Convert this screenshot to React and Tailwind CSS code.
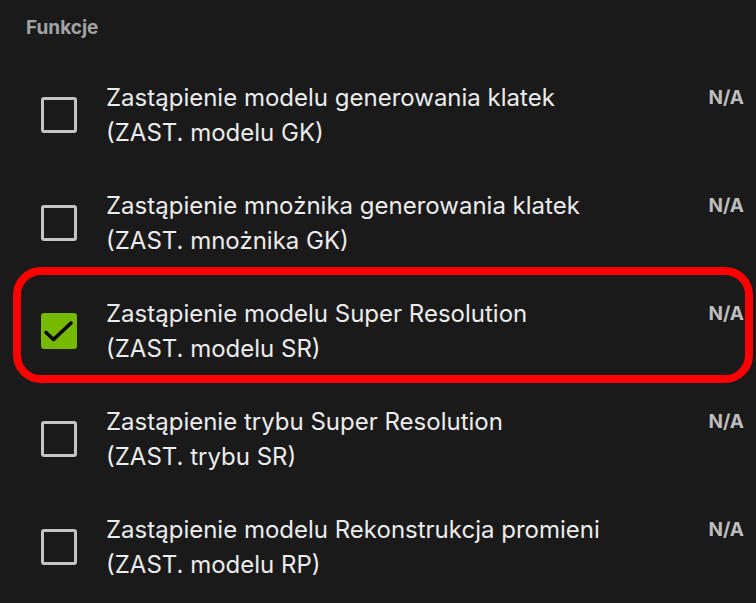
const rows = [
    { title: "Zastąpienie modelu generowania klatek", short: "(ZAST. modelu GK)", checked: false },
    { title: "Zastąpienie mnożnika generowania klatek", short: "(ZAST. mnożnika GK)", checked: false },
    { title: "Zastąpienie modelu Super Resolution", short: "(ZAST. modelu SR)", checked: true },
    { title: "Zastąpienie trybu Super Resolution", short: "(ZAST. trybu SR)", checked: false },
    { title: "Zastąpienie modelu Rekonstrukcja promieni", short: "(ZAST. modelu RP)", checked: false },
];

const Checkbox = ({ checked }) =>
    checked ? (
        <div className="w-[36px] h-[36px] rounded-[3px] bg-[#76b900] flex items-center justify-center shrink-0">
            <svg width="36" height="36" viewBox="0 0 36 36" fill="none">
                <path d="M5 19.5 L12.5 26.5 L30 10" stroke="#000" strokeWidth="3.6" strokeLinecap="round" strokeLinejoin="round" />
            </svg>
        </div>
    ) : (
        <div className="w-[36px] h-[36px] rounded-[3px] border-[3px] border-[#c4c4c4] shrink-0" />
    );

const App = () => {
    return (
        <div
            className="relative w-[756px] h-[603px] overflow-hidden bg-[#1a1a1a]"
            style={{ fontFamily: "Inter, 'Noto Sans', sans-serif" }}
        >
            <div className="pl-[26px] pt-[17px] text-[19px] leading-[22px] font-bold text-[#a3a3a3]">Funkcje</div>

            <div className="mt-[22px] flex flex-col">
                {rows.map((row) => (
                    <div key={row.title} className="h-[108px] flex items-center pl-[41px] pr-[12px]">
                        <Checkbox checked={row.checked} />
                        <div className="ml-[29px] flex-1 text-[24px] leading-[35px] text-[#ececec]">
                            <p>{row.title}</p>
                            <p>{row.short}</p>
                        </div>
                        {/* value column */}
                        <div className="self-start mt-[19px] text-[19px] leading-[35px] font-bold text-[#bdbdbd]">N/A</div>
                    </div>
                ))}
            </div>

            {/* annotation outline */}
            <div className="absolute left-[13px] top-[267px] w-[740px] h-[116px] rounded-[28px] border-[8px] border-[#ff0000] pointer-events-none" />
        </div>
    );
};

export default App;
